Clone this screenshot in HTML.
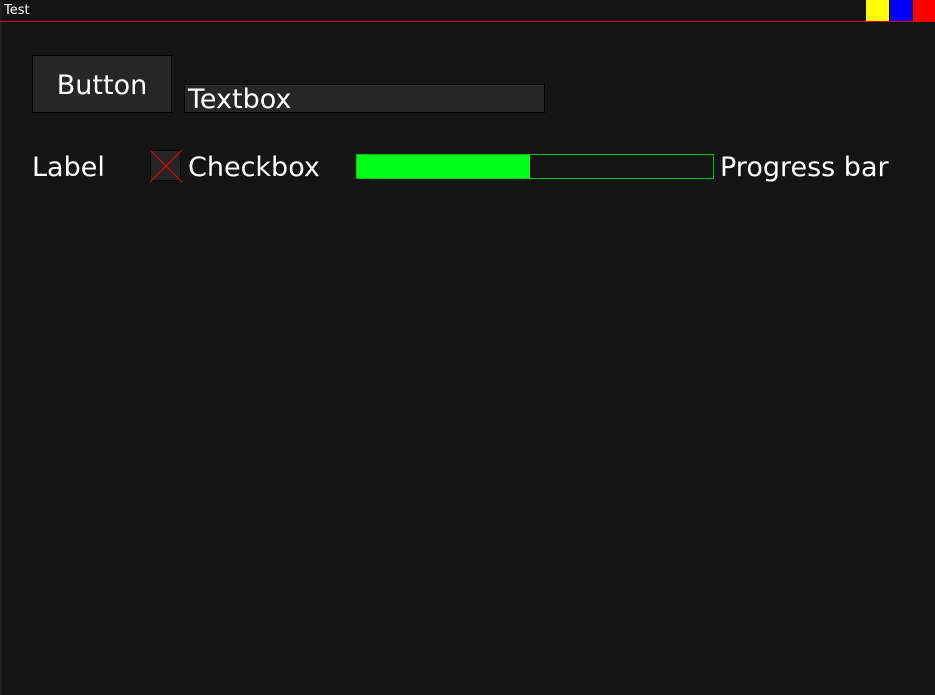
<!DOCTYPE html>
<html><head><style>
body{margin:0;width:935px;height:695px;background:#141414;position:relative;overflow:hidden;font-family:"DejaVu Sans","Liberation Sans",sans-serif;color:#fff}
div{position:absolute;box-sizing:border-box}
.t{white-space:nowrap;font-size:27px;line-height:30px}
</style></head><body>
<div style="left:0;top:0;width:2px;height:695px;background:#1e1e1e"></div>
<div style="left:4px;top:3px;font-size:13px;line-height:16px;white-space:nowrap">Test</div>
<div style="left:0;top:21px;width:935px;height:1px;background:#e00000;z-index:5"></div>
<div style="left:866px;top:0;width:23px;height:21px;background:#ffff00"></div>
<div style="left:890px;top:0;width:22px;height:21px;background:#0000ff"></div>
<div style="left:913px;top:0;width:22px;height:21px;background:#ff0000"></div>
<div style="left:32px;top:55px;width:140px;height:58px;background:#262626;border:1px solid #000"></div>
<div class="t" style="left:32px;top:71px;width:140px;text-align:center">Button</div>
<div style="left:184px;top:84px;width:361px;height:29px;background:#262626;border:1px solid #000"></div>
<div class="t" style="left:188px;top:85px">Textbox</div>
<div class="t" style="left:32px;top:153px">Label</div>
<div style="left:150px;top:150px;width:31px;height:31px;background:#262626;border:1px solid #000"></div>
<svg style="position:absolute;left:150px;top:150px" width="32" height="32"><path d="M0 0L32 32M32 0L0 32" stroke="#e00000" stroke-width="1.2"/></svg>
<div class="t" style="left:188px;top:153px">Checkbox</div>
<div style="left:356px;top:154px;width:358px;height:25px;border:1px solid #00c000;background:#141414"></div>
<div style="left:357px;top:155px;width:173px;height:23px;background:#00ff16"></div>
<div class="t" style="left:720px;top:153px">Progress bar</div>
</body></html>
